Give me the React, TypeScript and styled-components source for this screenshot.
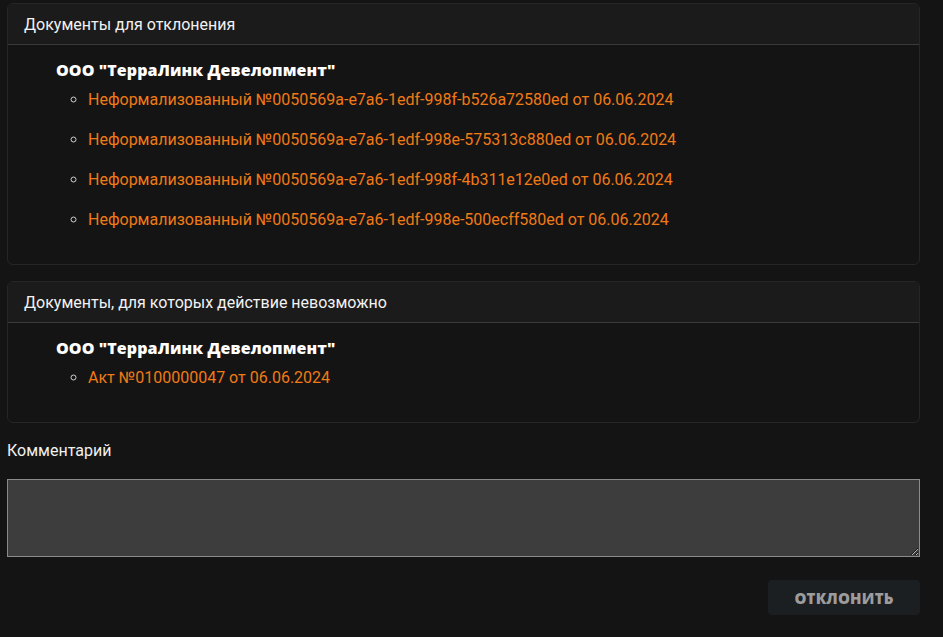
import React, { useState } from 'react';
import styled, { createGlobalStyle } from 'styled-components';

const GlobalStyle = createGlobalStyle`
  html, body {
    margin: 0;
    background: #141414;
  }
  body {
    font-family: Roboto, "Liberation Sans", sans-serif;
    color: #ececec;
  }
`;

const Page = styled.div`
  display: flex;
  flex-direction: column;
  padding: 3px 23px 0 7px;
`;

const Card = styled.section`
  border: 1px solid #262626;
  border-radius: 6px;
  background: #141414;
  overflow: hidden;
  margin-bottom: 16px;
`;

const CardHeader = styled.div`
  background: #1b1b1b;
  border-bottom: 1px solid #3a3a3a;
  padding: 0 16px;
  height: 40px;
  display: flex;
  align-items: center;
  font-size: 16px;
  color: #f2f2f2;
`;

const CardBody = styled.div`
  padding: 15px 16px 14px 48px;
`;

const OrgName = styled.div`
  font-family: "Open Sans", "DejaVu Sans", sans-serif;
  font-weight: 800;
  font-size: 16px;
  line-height: 20px;
  letter-spacing: 0.1px;
  color: #ffffff;
`;

const DocList = styled.ul`
  list-style: circle;
  margin: 11px 0 0;
  padding-left: 32px;
  color: #d0d0d0;
`;

const DocItem = styled.li`
  font-size: 16px;
  line-height: 18px;
  margin-bottom: 22px;
  &:last-child {
    margin-bottom: 21px;
  }
`;

const DocLink = styled.a`
  color: #f07a16;
  text-decoration: none;
  cursor: pointer;
`;

const Label = styled.div`
  font-size: 16px;
  line-height: 20px;
  margin-top: 2px;
  color: #f0f0f0;
`;

const Comment = styled.textarea`
  margin-top: 18px;
  height: 78px;
  box-sizing: border-box;
  background: #3d3d3d;
  border: 1px solid #8a8a8a;
  border-radius: 0;
  color: #eeeeee;
  font-family: Roboto, "Liberation Sans", sans-serif;
  font-size: 14px;
  padding: 6px;
  resize: vertical;
  outline: none;
`;

const Actions = styled.div`
  display: flex;
  justify-content: flex-end;
  margin-top: 23px;
`;

const RejectButton = styled.button`
  width: 152px;
  height: 35px;
  border: none;
  border-radius: 4px;
  background: #1c1f22;
  color: #9c9c9c;
  font-family: "Open Sans", "DejaVu Sans", sans-serif;
  font-weight: 800;
  font-size: 15px;
  letter-spacing: 0.2px;
  cursor: pointer;
`;

type DocGroup = { org: string; docs: string[] };

const toReject: DocGroup[] = [
  {
    org: 'ООО "ТерраЛинк Девелопмент"',
    docs: [
      'Неформализованный №0050569a-e7a6-1edf-998f-b526a72580ed от 06.06.2024',
      'Неформализованный №0050569a-e7a6-1edf-998e-575313c880ed от 06.06.2024',
      'Неформализованный №0050569a-e7a6-1edf-998f-4b311e12e0ed от 06.06.2024',
      'Неформализованный №0050569a-e7a6-1edf-998e-500ecff580ed от 06.06.2024',
    ],
  },
];

const blocked: DocGroup[] = [
  {
    org: 'ООО "ТерраЛинк Девелопмент"',
    docs: ['Акт №0100000047 от 06.06.2024'],
  },
];

const DocCard = ({ title, groups }: { title: string; groups: DocGroup[] }) => (
  <Card>
    <CardHeader>{title}</CardHeader>
    <CardBody>
      {groups.map((group, key) => (
        <div key={key}>
          <OrgName>{group.org}</OrgName>
          <DocList>
            {group.docs.map((doc, i) => (
              <DocItem key={i}>
                <DocLink>{doc}</DocLink>
              </DocItem>
            ))}
          </DocList>
        </div>
      ))}
    </CardBody>
  </Card>
);

const App: React.FunctionComponent = () => {
  const [comment, setComment] = useState('');

  return (
    <Page>
      <GlobalStyle />
      <DocCard title="Документы для отклонения" groups={toReject} />
      <DocCard title="Документы, для которых действие невозможно" groups={blocked} />
      <Label>Комментарий</Label>
      <Comment value={comment} onChange={(e) => setComment(e.target.value)} />
      <Actions>
        <RejectButton>ОТКЛОНИТЬ</RejectButton>
      </Actions>
    </Page>
  );
};

export default App;
